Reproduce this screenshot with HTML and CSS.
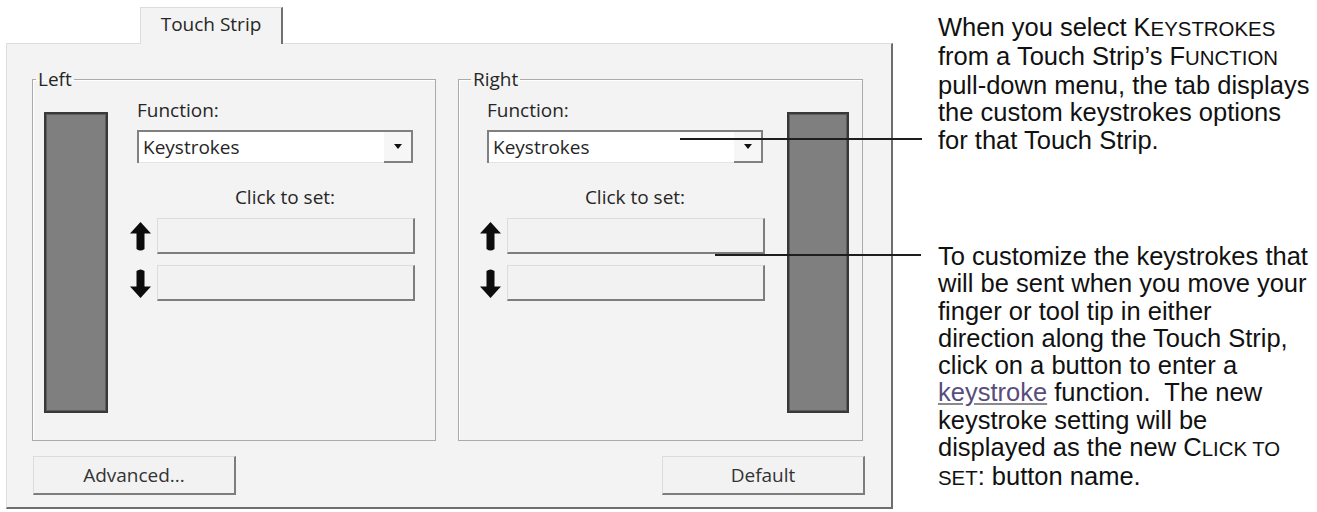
FILE: index.html
```html
<!DOCTYPE html>
<html lang="en">
<head>
    <meta charset="UTF-8">
    <title>Touch Strip Settings</title>
    <link rel="stylesheet" href="styles.css">
</head>
<body>
    <div class="page">
        <div class="dialog">
            <div class="tabs">
                <div class="tab">Touch Strip</div>
            </div>
            <div class="panel">
                <div class="groups">
                    <fieldset class="group group-left">
                        <legend>Left</legend>
                        <div class="strip"></div>
                        <div class="controls">
                            <div class="label">Function:</div>
                            <div class="combo">
                                <span class="combo-value">Keystrokes</span>
                                <span class="combo-button"><span class="caret"></span></span>
                            </div>
                            <div class="hint">Click to set:</div>
                            <div class="key-row">
                                <svg class="arrow" width="21" height="29" viewBox="0 0 21 29"><path d="M10.5 0 L21 11.5 L14.5 11.5 L14.5 27 Q10.5 30 6.5 27 L6.5 11.5 L0 11.5 Z"/></svg>
                                <button class="key"></button>
                            </div>
                            <div class="key-row">
                                <svg class="arrow" width="21" height="29" viewBox="0 0 21 29"><path d="M10.5 29 L21 17.5 L14.5 17.5 L14.5 2 Q10.5 -1 6.5 2 L6.5 17.5 L0 17.5 Z"/></svg>
                                <button class="key"></button>
                            </div>
                        </div>
                    </fieldset>
                    <fieldset class="group group-right">
                        <legend>Right</legend>
                        <div class="controls">
                            <div class="label">Function:</div>
                            <div class="combo">
                                <span class="combo-value">Keystrokes</span>
                                <span class="combo-button"><span class="caret"></span></span>
                            </div>
                            <div class="hint">Click to set:</div>
                            <div class="key-row">
                                <svg class="arrow" width="21" height="29" viewBox="0 0 21 29"><path d="M10.5 0 L21 11.5 L14.5 11.5 L14.5 27 Q10.5 30 6.5 27 L6.5 11.5 L0 11.5 Z"/></svg>
                                <button class="key"></button>
                            </div>
                            <div class="key-row">
                                <svg class="arrow" width="21" height="29" viewBox="0 0 21 29"><path d="M10.5 29 L21 17.5 L14.5 17.5 L14.5 2 Q10.5 -1 6.5 2 L6.5 17.5 L0 17.5 Z"/></svg>
                                <button class="key"></button>
                            </div>
                        </div>
                        <div class="strip"></div>
                    </fieldset>
                </div>
                <div class="actions">
                    <button class="btn">Advanced...</button>
                    <button class="btn">Default</button>
                </div>
            </div>
        </div>

        <div class="notes">
            <p>When you select K<span class="sc">eystrokes</span><br>
            from a Touch Strip&rsquo;s F<span class="sc">unction</span><br>
            pull-down menu, the tab displays<br>
            the custom keystrokes options<br>
            for that Touch Strip.</p>
            <p>To customize the keystrokes that<br>
            will be sent when you move your<br>
            finger or tool tip in either<br>
            direction along the Touch Strip,<br>
            click on a button to enter a<br>
            <a href="#">keystroke</a> function.&nbsp; The new<br>
            keystroke setting will be<br>
            displayed as the new C<span class="sc">lick to</span><br>
            <span class="sc">set</span>: button name.</p>
        </div>

        <!-- leader lines from the notes to the controls -->
        <span class="callout callout-combo"></span>
        <span class="callout callout-keys"></span>
    </div>
</body>
</html>
```

FILE: styles.css
```css
/* Page */
body {
    margin: 0;
    background: #fff;
    font-family: "Open Sans", sans-serif;
    color: #262626;
}

.page {
    position: relative;
    display: flex;
    width: 1317px;
    height: 512px;
    overflow: hidden;
}

/* Dialog */
.dialog {
    width: 893px;
    flex-shrink: 0;
}

.tabs {
    display: flex;
    align-items: flex-end;
    height: 43px;
    padding-left: 140px;
}

.tab {
    position: relative;
    z-index: 1;
    box-sizing: border-box;
    width: 143px;
    height: 37px;
    margin-bottom: -1px;
    background: #f3f3f3;
    border-top: 1px solid #dcdcdc;
    border-left: 1px solid #dcdcdc;
    border-right: 2px solid #707070;
    font-size: 19px;
    line-height: 33px;
    text-align: center;
}

.panel {
    box-sizing: border-box;
    width: 887px;
    margin-left: 6px;
    padding: 24px 28px 12px 25px;
    background: #f3f3f3;
    border-top: 1px solid #dedede;
    border-left: 1px solid #dedede;
    border-right: 2px solid #6e6e6e;
    border-bottom: 2px solid #6e6e6e;
}

.groups {
    display: flex;
    gap: 22px;
}

.group {
    box-sizing: border-box;
    flex: none;
    display: flex;
    align-items: flex-start;
    min-width: 0;
    margin: 0;
    padding: 9px 0 27px;
    border: 1px solid #aaa;
    box-shadow: inset 1px 1px 0 #fff;
}

.group legend {
    padding: 0 2px;
    font-size: 19px;
    line-height: 22px;
}

/* legend sits after the padding, so pull it back toward the corner */
.group-left {
    width: 404px;
    padding-left: 11px;
    gap: 29px;
}

.group-left legend {
    margin-left: -8px;
}

.group-right {
    width: 405px;
    padding-left: 28px;
    gap: 24px;
}

.group-right legend {
    margin-left: -16px;
}

.strip {
    box-sizing: border-box;
    flex: none;
    width: 64px;
    height: 301px;
    margin-top: 13px;
    background: #7f7f7f;
    border: 2px solid #383838;
    box-shadow: inset 0 0 0 1px #5c5c5c;
}

.group-right .strip {
    width: 62px;
}

/* Function column */
.controls {
    flex: none;
    display: flex;
    flex-direction: column;
    width: 276px;
    font-size: 19px;
}

.label {
    line-height: 22px;
}

.combo {
    display: flex;
    box-sizing: border-box;
    height: 33px;
    margin-top: 9px;
    background: #fff;
    border-top: 2px solid #808080;
    border-left: 2px solid #808080;
    border-right: 2px solid #808080;
}

.combo-value {
    flex: 1;
    padding-left: 4px;
    line-height: 30px;
    border-bottom: 1px solid #e4e4e4;
}

.combo-button {
    display: flex;
    align-items: center;
    justify-content: center;
    width: 27px;
    background: #f6f6f6;
    border-bottom: 2px solid #808080;
}

.caret {
    width: 0;
    height: 0;
    border-left: 4px solid transparent;
    border-right: 4px solid transparent;
    border-top: 5px solid #111;
}

.hint {
    margin-top: 23px;
    padding-left: 20px;
    line-height: 22px;
    text-align: center;
}

.key-row {
    display: flex;
    align-items: center;
    gap: 6px;
    margin: 10px -2px 0 -7px;
}

.key-row + .key-row {
    margin-top: 11px;
}

.arrow {
    flex-shrink: 0;
    fill: #0c0c0c;
}

.key {
    flex: 1;
    height: 36px;
    padding: 0;
    background: #f2f2f2;
    border-top: 1px solid #dcdcdc;
    border-left: 1px solid #dcdcdc;
    border-right: 2px solid #7d7d7d;
    border-bottom: 2px solid #7d7d7d;
}

/* Bottom buttons */
.actions {
    display: flex;
    justify-content: space-between;
    margin: 15px -2px 0 1px;
}

.btn {
    width: 203px;
    height: 39px;
    padding: 0;
    background: #f2f2f2;
    border-top: 1px solid #dcdcdc;
    border-left: 1px solid #dcdcdc;
    border-right: 2px solid #7d7d7d;
    border-bottom: 2px solid #7d7d7d;
    font-family: inherit;
    font-size: 19px;
    color: #333;
}

/* Notes column */
.notes {
    margin-left: 45px;
    padding-top: 13.5px;
    font-family: "Liberation Sans", Arial, sans-serif;
    font-size: 25.5px;
    line-height: 27.3px;
    color: #111;
    white-space: nowrap;
}

.notes p {
    margin: 0;
}

.notes p + p {
    margin-top: 89px;
}

.notes a {
    color: #574d7d;
    text-decoration-color: #8a8a8a;
}

.sc {
    font-size: 0.8em;
    text-transform: uppercase;
}

.callout {
    position: absolute;
    height: 2px;
    background: #1e1e1e;
}

.callout-combo {
    left: 680px;
    top: 138px;
    width: 242px;
}

.callout-keys {
    left: 715px;
    top: 254px;
    width: 206px;
}
```
